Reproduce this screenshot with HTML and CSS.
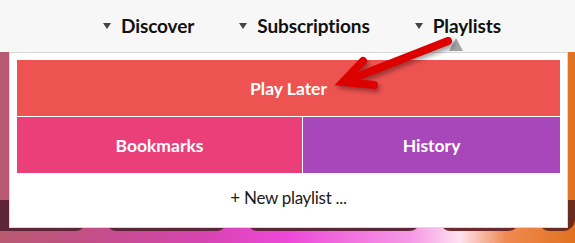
FILE: index.html
```html
<!DOCTYPE html>
<html>
<head>
<meta charset="utf-8">
<link rel="stylesheet" href="styles.css">
</head>
<body>
<div class="page">
  <header class="topbar">
    <nav class="nav">
      <a class="nav-item"><span class="tri"></span>Discover</a>
      <a class="nav-item"><span class="tri"></span>Subscriptions</a>
      <a class="nav-item"><span class="tri"></span>Playlists</a>
    </nav>
  </header>
  <main class="stage">
    <div class="tiles">
      <div class="tile t1"></div>
      <div class="tile t2"></div>
      <div class="tile t3"></div>
      <div class="tile t4"></div>
      <div class="tile t5"></div>
    </div>
  </main>
  <span class="caret"></span>
  <div class="dropdown">
    <div class="menu">
      <a class="btn later">Play Later</a>
      <div class="pair">
        <a class="btn bookmarks">Bookmarks</a>
        <a class="btn history">History</a>
      </div>
    </div>
    <a class="new">+ New playlist ...</a>
  </div>
  <svg class="arrow" width="575" height="243" viewBox="0 0 575 243">
    <g stroke="#dc0000" stroke-width="8" stroke-linecap="round" stroke-linejoin="miter" fill="none">
      <path d="M448 41 L346 81"/>
      <path d="M363 61 L343 82 L374 85"/>
    </g>
  </svg>
</div>
</body>
</html>
```
FILE: styles.css
```css
html, body {
  margin: 0;
  padding: 0;
}
body {
  width: 575px;
  height: 243px;
  overflow: hidden;
  font-family: Lato, "Open Sans", sans-serif;
}
.page {
  position: relative;
  width: 575px;
  height: 243px;
  display: flex;
  flex-direction: column;
}
.topbar {
  height: 52px;
  background: #f7f7f7;
  flex: none;
}
.nav {
  display: flex;
  gap: 45px;
  padding-left: 103px;
  height: 52px;
  align-items: center;
  box-sizing: border-box;
  padding-bottom: 1px;
}
.nav-item {
  display: flex;
  align-items: center;
  font-weight: 700;
  font-size: 19px;
  color: #111;
  letter-spacing: -0.1px;
}
.tri {
  width: 0;
  height: 0;
  border-left: 4px solid transparent;
  border-right: 4px solid transparent;
  border-top: 6px solid #444;
  margin-right: 10px;
  margin-top: 1px;
}
.stage {
  flex: 1;
  background: linear-gradient(90deg, #b85a72 0%, #c24f86 15%, #d544b0 35%, #ee48d8 50%, #f79ce6 72%, #fde2ef 80%, #ef8a52 88%, #e0721f 100%);
  display: flex;
  flex-direction: column;
  justify-content: flex-end;
  padding-bottom: 12px;
}
.tiles {
  display: flex;
  gap: 18px;
  margin-left: -10px;
}
.tile {
  height: 31px;
  background: #5c2638;
  border-radius: 0 0 12px 12px;
}
.t1 { width: 105px; }
.t2 { width: 133px; }
.t3 { width: 190px; }
.t4 { width: 88px; background: #6a2a2e; }
.t5 { width: 40px; background: #6a2a1e; }
.caret {
  position: absolute;
  left: 449px;
  top: 38px;
  width: 0;
  height: 0;
  border-left: 7px solid transparent;
  border-right: 7px solid transparent;
  border-bottom: 13px solid #a3a3a3;
}
.dropdown {
  position: absolute;
  left: 9px;
  top: 52px;
  width: 559px;
  height: 176px;
  box-sizing: border-box;
  background: #fff;
  border: 1px solid #d9d9d9;
  padding: 7px 7px 0;
  display: flex;
  flex-direction: column;
}
.menu {
  display: flex;
  flex-direction: column;
  gap: 1px;
}
.btn {
  display: flex;
  align-items: center;
  justify-content: center;
  height: 56px;
  color: #fff;
  font-weight: 700;
  font-size: 17.5px;
}
.later { background: #ed5350; }
.pair {
  display: grid;
  grid-template-columns: 285px 1fr;
  gap: 1px;
}
.bookmarks { background: #eb3f79; }
.history { background: #a847b9; }
.new {
  flex: 1;
  display: flex;
  align-items: center;
  justify-content: center;
  font-size: 17px;
  color: #1a1a1a;
  padding-bottom: 6px;
  letter-spacing: -0.3px;
}
.arrow {
  position: absolute;
  left: 0;
  top: 0;
  filter: drop-shadow(2px 3px 2px rgba(0,0,0,0.35));
}
```
